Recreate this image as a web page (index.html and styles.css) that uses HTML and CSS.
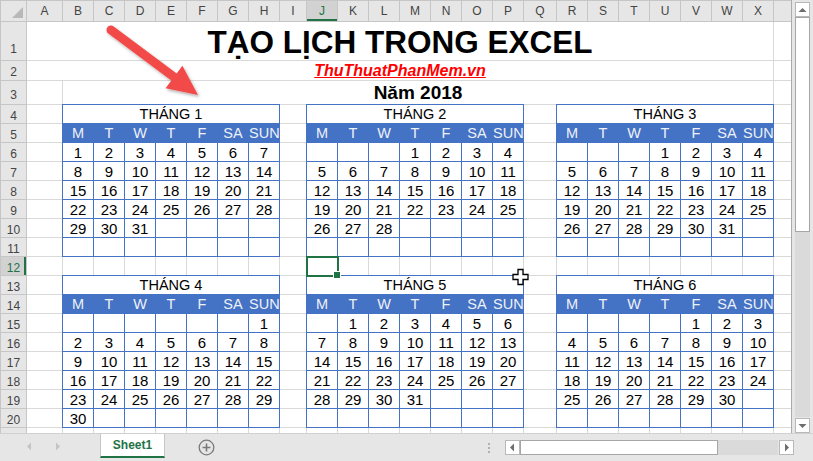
FILE: index.html
```html
<!DOCTYPE html>
<html lang="vi">
<head>
<meta charset="utf-8">
<title>Tạo lịch trong Excel</title>
<link rel="stylesheet" href="styles.css">
</head>
<body>
<div class="window">
  <div class="main">
    <div class="sheet">
      <table class="grid">
        <colgroup>
          <col class="c-rh"><col class="c-a">
          <col class="c-w"><col class="c-w"><col class="c-w"><col class="c-w"><col class="c-w"><col class="c-w"><col class="c-w">
          <col class="c-i">
          <col class="c-w"><col class="c-w"><col class="c-w"><col class="c-w"><col class="c-w"><col class="c-w"><col class="c-w">
          <col class="c-q">
          <col class="c-w"><col class="c-w"><col class="c-w"><col class="c-w"><col class="c-w"><col class="c-w"><col class="c-w">
          <col class="c-y">
        </colgroup>
        <tr class="hdr">
          <th class="corner"><svg class="corner-tri" width="26" height="20" viewBox="0 0 26 20"><polygon points="22,6 22,17 11,17" fill="#b8b8b8"/></svg></th>
          <th class="ch">A</th><th class="ch">B</th><th class="ch">C</th><th class="ch">D</th><th class="ch">E</th><th class="ch">F</th><th class="ch">G</th><th class="ch">H</th><th class="ch">I</th><th class="ch sel">J</th><th class="ch">K</th><th class="ch">L</th><th class="ch">M</th><th class="ch">N</th><th class="ch">O</th><th class="ch">P</th><th class="ch">Q</th><th class="ch">R</th><th class="ch">S</th><th class="ch">T</th><th class="ch">U</th><th class="ch">V</th><th class="ch">W</th><th class="ch">X</th><th class="ch"></th>
        </tr>
        <tr class="r1"><th class="rh">1</th><td colspan="24" class="title">TẠO LỊCH TRONG EXCEL</td><td></td></tr>
        <tr class="r2"><th class="rh">2</th><td colspan="24" class="site"><span class="link">ThuThuatPhanMem.vn</span></td><td></td></tr>
        <tr class="r3"><th class="rh">3</th><td></td><td colspan="23" class="year">Năm 2018</td><td></td></tr>
        <tr><th class="rh">4</th><td></td><td colspan="7" class="mt">THÁNG 1</td><td></td><td colspan="7" class="mt">THÁNG 2</td><td></td><td colspan="7" class="mt">THÁNG 3</td><td></td></tr>
        <tr><th class="rh">5</th><td></td><td class="wd">M</td><td class="wd">T</td><td class="wd">W</td><td class="wd">T</td><td class="wd">F</td><td class="wd">SA</td><td class="wd">SUN</td><td></td><td class="wd">M</td><td class="wd">T</td><td class="wd">W</td><td class="wd">T</td><td class="wd">F</td><td class="wd">SA</td><td class="wd">SUN</td><td></td><td class="wd">M</td><td class="wd">T</td><td class="wd">W</td><td class="wd">T</td><td class="wd">F</td><td class="wd">SA</td><td class="wd">SUN</td><td></td></tr>
        <tr><th class="rh">6</th><td></td><td class="d">1</td><td class="d">2</td><td class="d">3</td><td class="d">4</td><td class="d">5</td><td class="d">6</td><td class="d">7</td><td></td><td class="d"></td><td class="d"></td><td class="d"></td><td class="d">1</td><td class="d">2</td><td class="d">3</td><td class="d">4</td><td></td><td class="d"></td><td class="d"></td><td class="d"></td><td class="d">1</td><td class="d">2</td><td class="d">3</td><td class="d">4</td><td></td></tr>
        <tr><th class="rh">7</th><td></td><td class="d">8</td><td class="d">9</td><td class="d">10</td><td class="d">11</td><td class="d">12</td><td class="d">13</td><td class="d">14</td><td></td><td class="d">5</td><td class="d">6</td><td class="d">7</td><td class="d">8</td><td class="d">9</td><td class="d">10</td><td class="d">11</td><td></td><td class="d">5</td><td class="d">6</td><td class="d">7</td><td class="d">8</td><td class="d">9</td><td class="d">10</td><td class="d">11</td><td></td></tr>
        <tr><th class="rh">8</th><td></td><td class="d">15</td><td class="d">16</td><td class="d">17</td><td class="d">18</td><td class="d">19</td><td class="d">20</td><td class="d">21</td><td></td><td class="d">12</td><td class="d">13</td><td class="d">14</td><td class="d">15</td><td class="d">16</td><td class="d">17</td><td class="d">18</td><td></td><td class="d">12</td><td class="d">13</td><td class="d">14</td><td class="d">15</td><td class="d">16</td><td class="d">17</td><td class="d">18</td><td></td></tr>
        <tr><th class="rh">9</th><td></td><td class="d">22</td><td class="d">23</td><td class="d">24</td><td class="d">25</td><td class="d">26</td><td class="d">27</td><td class="d">28</td><td></td><td class="d">19</td><td class="d">20</td><td class="d">21</td><td class="d">22</td><td class="d">23</td><td class="d">24</td><td class="d">25</td><td></td><td class="d">19</td><td class="d">20</td><td class="d">21</td><td class="d">22</td><td class="d">23</td><td class="d">24</td><td class="d">25</td><td></td></tr>
        <tr><th class="rh">10</th><td></td><td class="d">29</td><td class="d">30</td><td class="d">31</td><td class="d"></td><td class="d"></td><td class="d"></td><td class="d"></td><td></td><td class="d">26</td><td class="d">27</td><td class="d">28</td><td class="d"></td><td class="d"></td><td class="d"></td><td class="d"></td><td></td><td class="d">26</td><td class="d">27</td><td class="d">28</td><td class="d">29</td><td class="d">30</td><td class="d">31</td><td class="d"></td><td></td></tr>
        <tr><th class="rh">11</th><td></td><td class="d"></td><td class="d"></td><td class="d"></td><td class="d"></td><td class="d"></td><td class="d"></td><td class="d"></td><td></td><td class="d"></td><td class="d"></td><td class="d"></td><td class="d"></td><td class="d"></td><td class="d"></td><td class="d"></td><td></td><td class="d"></td><td class="d"></td><td class="d"></td><td class="d"></td><td class="d"></td><td class="d"></td><td class="d"></td><td></td></tr>
        <tr><th class="rh sel">12</th><td></td><td></td><td></td><td></td><td></td><td></td><td></td><td></td><td></td><td class="active"></td><td></td><td></td><td></td><td></td><td></td><td></td><td></td><td></td><td></td><td></td><td></td><td></td><td></td><td></td><td></td></tr>
        <tr><th class="rh">13</th><td></td><td colspan="7" class="mt">THÁNG 4</td><td></td><td colspan="7" class="mt">THÁNG 5</td><td></td><td colspan="7" class="mt">THÁNG 6</td><td></td></tr>
        <tr><th class="rh">14</th><td></td><td class="wd">M</td><td class="wd">T</td><td class="wd">W</td><td class="wd">T</td><td class="wd">F</td><td class="wd">SA</td><td class="wd">SUN</td><td></td><td class="wd">M</td><td class="wd">T</td><td class="wd">W</td><td class="wd">T</td><td class="wd">F</td><td class="wd">SA</td><td class="wd">SUN</td><td></td><td class="wd">M</td><td class="wd">T</td><td class="wd">W</td><td class="wd">T</td><td class="wd">F</td><td class="wd">SA</td><td class="wd">SUN</td><td></td></tr>
        <tr><th class="rh">15</th><td></td><td class="d"></td><td class="d"></td><td class="d"></td><td class="d"></td><td class="d"></td><td class="d"></td><td class="d">1</td><td></td><td class="d"></td><td class="d">1</td><td class="d">2</td><td class="d">3</td><td class="d">4</td><td class="d">5</td><td class="d">6</td><td></td><td class="d"></td><td class="d"></td><td class="d"></td><td class="d"></td><td class="d">1</td><td class="d">2</td><td class="d">3</td><td></td></tr>
        <tr><th class="rh">16</th><td></td><td class="d">2</td><td class="d">3</td><td class="d">4</td><td class="d">5</td><td class="d">6</td><td class="d">7</td><td class="d">8</td><td></td><td class="d">7</td><td class="d">8</td><td class="d">9</td><td class="d">10</td><td class="d">11</td><td class="d">12</td><td class="d">13</td><td></td><td class="d">4</td><td class="d">5</td><td class="d">6</td><td class="d">7</td><td class="d">8</td><td class="d">9</td><td class="d">10</td><td></td></tr>
        <tr><th class="rh">17</th><td></td><td class="d">9</td><td class="d">10</td><td class="d">11</td><td class="d">12</td><td class="d">13</td><td class="d">14</td><td class="d">15</td><td></td><td class="d">14</td><td class="d">15</td><td class="d">16</td><td class="d">17</td><td class="d">18</td><td class="d">19</td><td class="d">20</td><td></td><td class="d">11</td><td class="d">12</td><td class="d">13</td><td class="d">14</td><td class="d">15</td><td class="d">16</td><td class="d">17</td><td></td></tr>
        <tr><th class="rh">18</th><td></td><td class="d">16</td><td class="d">17</td><td class="d">18</td><td class="d">19</td><td class="d">20</td><td class="d">21</td><td class="d">22</td><td></td><td class="d">21</td><td class="d">22</td><td class="d">23</td><td class="d">24</td><td class="d">25</td><td class="d">26</td><td class="d">27</td><td></td><td class="d">18</td><td class="d">19</td><td class="d">20</td><td class="d">21</td><td class="d">22</td><td class="d">23</td><td class="d">24</td><td></td></tr>
        <tr><th class="rh">19</th><td></td><td class="d">23</td><td class="d">24</td><td class="d">25</td><td class="d">26</td><td class="d">27</td><td class="d">28</td><td class="d">29</td><td></td><td class="d">28</td><td class="d">29</td><td class="d">30</td><td class="d">31</td><td class="d"></td><td class="d"></td><td class="d"></td><td></td><td class="d">25</td><td class="d">26</td><td class="d">27</td><td class="d">28</td><td class="d">29</td><td class="d">30</td><td class="d"></td><td></td></tr>
        <tr><th class="rh">20</th><td></td><td class="d">30</td><td class="d"></td><td class="d"></td><td class="d"></td><td class="d"></td><td class="d"></td><td class="d"></td><td></td><td class="d"></td><td class="d"></td><td class="d"></td><td class="d"></td><td class="d"></td><td class="d"></td><td class="d"></td><td></td><td class="d"></td><td class="d"></td><td class="d"></td><td class="d"></td><td class="d"></td><td class="d"></td><td class="d"></td><td></td></tr>
        <tr><th class="rh"></th><td></td><td></td><td></td><td></td><td></td><td></td><td></td><td></td><td></td><td></td><td></td><td></td><td></td><td></td><td></td><td></td><td></td><td></td><td></td><td></td><td></td><td></td><td></td><td></td><td></td></tr>
      </table>
    </div>
    <div class="vscroll">
      <div class="vbtn"><svg width="13" height="12" viewBox="0 0 13 12"><polygon points="2.5,8 10.5,8 6.5,4" fill="#6d6d6d"/></svg></div>
      <div class="vthumb"></div>
      <div class="vtrack"></div>
      <div class="vbtn"><svg width="13" height="12" viewBox="0 0 13 12"><polygon points="2.5,4 10.5,4 6.5,8" fill="#6d6d6d"/></svg></div>
    </div>
  </div>
  <div class="tabbar">
    <div class="sheets">
      <div class="nav">
        <svg width="6" height="9" viewBox="0 0 6 9"><polygon points="5,0.5 5,8.5 1,4.5" fill="#c4c4c4"/></svg>
        <svg width="6" height="9" viewBox="0 0 6 9"><polygon points="1,0.5 1,8.5 5,4.5" fill="#c4c4c4"/></svg>
      </div>
      <div class="tab">Sheet1</div>
      <div class="add"><svg width="17" height="17" viewBox="0 0 17 17"><circle cx="8.5" cy="8.5" r="7.3" fill="none" stroke="#7a7a7a" stroke-width="1.3"/><path d="M8.5 4.5v8M4.5 8.5h8" stroke="#7a7a7a" stroke-width="1.6"/></svg></div>
    </div>
    <div class="hscroll">
      <div class="grip"><i></i><i></i><i></i></div>
      <div class="hbtn"><svg width="13" height="13" viewBox="0 0 13 13"><polygon points="8,2.5 8,10.5 4,6.5" fill="#6d6d6d"/></svg></div>
      <div class="hthumb"></div>
      <div class="htrack"></div>
      <div class="hbtn"><svg width="13" height="13" viewBox="0 0 13 13"><polygon points="5,2.5 5,10.5 9,6.5" fill="#6d6d6d"/></svg></div>
    </div>
  </div>
</div>
<svg class="overlay" width="813" height="461" viewBox="0 0 813 461">
  <defs>
    <filter id="sh" x="-20%" y="-20%" width="140%" height="140%">
      <feDropShadow dx="1.5" dy="2" stdDeviation="1.5" flood-color="#000" flood-opacity="0.3"/>
    </filter>
  </defs>
  <g filter="url(#sh)">
    <line x1="111" y1="30" x2="176" y2="78.5" stroke="#f24a4a" stroke-width="9" stroke-linecap="round"/>
    <polygon points="198,95 165.6,88.2 182.4,65.8" fill="#f24a4a"/>
  </g>
  <polygon class="cursor" points="518,269.5 523,269.5 523,274.5 528,274.5 528,279.5 523,279.5 523,284.5 518,284.5 518,279.5 513,279.5 513,274.5 518,274.5" fill="#fff" stroke="#000" stroke-width="1.3"/>
</svg>
</body>
</html>
```
FILE: styles.css
```css
* { box-sizing: border-box; }
html, body { margin: 0; padding: 0; }
body {
  width: 813px;
  height: 461px;
  overflow: hidden;
  position: relative;
  background: #e6e6e6;
  font-family: "Liberation Sans", Arial, sans-serif;
}
.window { display: flex; flex-direction: column; width: 813px; height: 461px; }
.main { display: flex; height: 433px; }
.sheet {
  width: 792px;
  height: 433px;
  overflow: hidden;
  background: #fff;
  border-right: 1px solid #ababab;
}
.grid {
  border-collapse: collapse;
  table-layout: fixed;
  width: 792px;
}
.c-rh { width: 26px; }
.c-a { width: 36px; }
.c-w { width: 31px; }
.c-i { width: 27px; }
.c-q { width: 33px; }
.c-y { width: 19px; }
.grid tr { height: 19px; }
.grid tr.hdr { height: 20px; }
.grid tr.r1 { height: 39px; }
.grid tr.r2 { height: 20px; }
.grid tr.r3 { height: 24px; }
.grid th {
  font-weight: normal;
  background: #e6e6e6;
  color: #444;
  font-size: 12px;
  line-height: 14px;
  border: 1px solid #c6c6c6;
  padding: 0;
  text-align: center;
  vertical-align: bottom;
}
.grid th.ch { padding-bottom: 3px; }
.grid th.corner { position: relative; vertical-align: top; }
.corner-tri { display: block; }
.grid th.sel { background: #d2d2d2; color: #217346; }
.grid th.ch.sel { box-shadow: inset 0 -2px 0 #217346; }
.grid th.rh.sel { box-shadow: inset -2px 0 0 #217346; }
.r1 th.rh { padding-bottom: 4px; }
.r2 th.rh { padding-bottom: 1px; }
.r3 th.rh { padding-bottom: 2px; }
.grid td {
  border: 1px solid #d9d9d9;
  padding: 0;
  font-size: 14px;
  line-height: 17px;
  text-align: center;
  vertical-align: bottom;
  white-space: nowrap;
  overflow: hidden;
  color: #000;
}
.grid td.title { font-size: 31.5px; font-weight: bold; line-height: 36px; }
.grid td.site { font-size: 16px; line-height: 18px; }
.link { color: #f00; font-weight: bold; font-style: italic; text-decoration: underline; }
.grid td.year { font-size: 19px; font-weight: bold; line-height: 22px; }
.grid td.mt { border: 1px double #4472c4; font-size: 14.5px; }
.grid td.wd { border: 1px double #4472c4; background: #4472c4; color: #eef1f8; font-size: 14.5px; }
.grid td.d { border: 1px double #4472c4; font-size: 15px; }
.grid td.active {
  position: relative;
  overflow: visible;
  outline: 2px solid #217346;
  outline-offset: -1px;
}
.grid td.active::after {
  content: "";
  position: absolute;
  right: -4px;
  bottom: -4px;
  width: 6px;
  height: 6px;
  background: #217346;
  border: 1px solid #fff;
}
.vscroll {
  width: 21px;
  height: 433px;
  padding: 2px 3px 0 3px;
  display: flex;
  flex-direction: column;
}
.vbtn {
  height: 15px;
  flex: none;
  background: #fff;
  border: 1px solid #b9b9b9;
  display: flex;
  align-items: center;
  justify-content: center;
}
.vthumb {
  height: 215px;
  flex: none;
  background: #fff;
  border: 1px solid #a6a6a6;
}
.vtrack { flex: 1; background: #dadada; margin-bottom: 1px; }
.tabbar {
  height: 28px;
  display: flex;
  border-top: 1px solid #d0d0d0;
}
.sheets { width: 480px; display: flex; }
.nav {
  width: 100px;
  display: flex;
  align-items: center;
  gap: 23px;
  padding-left: 26px;
  padding-bottom: 3px;
}
.nav svg { display: block; }
.tab {
  width: 65px;
  height: 24px;
  background: #fff;
  border-left: 1px solid #c6c6c6;
  border-right: 1px solid #c6c6c6;
  border-bottom: 2px solid #217346;
  color: #217346;
  font-weight: bold;
  font-size: 12px;
  text-align: center;
  line-height: 19px;
  padding-top: 2px;
}
.add { margin-left: 33px; padding-top: 5px; }
.add svg { display: block; }
.hscroll {
  flex: 1;
  display: flex;
  align-items: flex-start;
  padding-top: 6px;
}
.grip {
  width: 25px;
  display: flex;
  flex-direction: column;
  gap: 2px;
  padding-left: 8px;
  padding-top: 3px;
}
.grip i { display: block; width: 2px; height: 2px; background: #b0b0b0; }
.hbtn {
  width: 15px;
  height: 15px;
  background: #fff;
  border: 1px solid #b9b9b9;
  display: flex;
  align-items: center;
  justify-content: center;
}
.hthumb { width: 198px; height: 15px; background: #fff; border: 1px solid #a6a6a6; }
.htrack { width: 60px; height: 15px; background: #dadada; margin-right: 1px; }
.overlay { position: absolute; left: 0; top: 0; pointer-events: none; }
```
